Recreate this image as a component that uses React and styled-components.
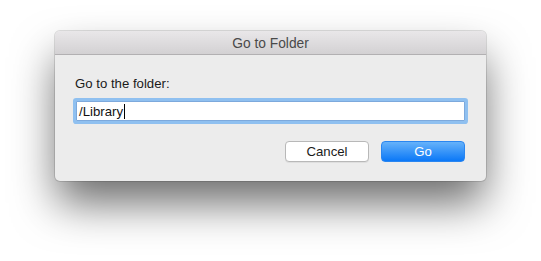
import React from "react";
import styled, { createGlobalStyle } from "styled-components";

const Global = createGlobalStyle`
  html, body { margin: 0; padding: 0; background: #ffffff; }
  body { font-family: "Liberation Sans", "Helvetica Neue", Arial, sans-serif; }
`;

const Stage = styled.div`
  width: 541px;
  height: 261px;
  padding: 31px 0 0 55px;
  box-sizing: border-box;
  overflow: hidden;
`;

const Window = styled.div`
  width: 431px;
  height: 150px;
  box-sizing: border-box;
  background: #ececec;
  border-radius: 5px;
  box-shadow: 0 0 0 1px rgba(0, 0, 0, 0.12), 0 24px 44px -2px rgba(0, 0, 0, 0.58);
  display: flex;
  flex-direction: column;
  overflow: hidden;
`;

const TitleBar = styled.div`
  height: 21px;
  flex: none;
  border-bottom: 1px solid #b2b0b2;
  background: linear-gradient(#e9e7e9, #d3d1d3);
  display: flex;
  align-items: center;
  justify-content: center;
  font-size: 13.8px;
  color: #4a4a4a;
  padding-top: 2px;
`;

const Body = styled.div`
  flex: 1;
  display: flex;
  flex-direction: column;
  padding: 21px 21px 20px 20px;
`;

const Label = styled.div`
  font-size: 13.2px;
  line-height: 16px;
  color: #1a1a1a;
`;

const Field = styled.div`
  margin: 9px 0 0 1px;
  height: 20px;
  box-sizing: border-box;
  background: #ffffff;
  border: 1px solid #7da9dc;
  box-shadow: 0 0 0 3px #8fc0f0;
  border-radius: 1px;
  display: flex;
  align-items: center;
  padding-left: 2px;
  font-size: 13.2px;
  color: #111;
`;

const Caret = styled.span`
  display: inline-block;
  width: 1px;
  height: 15px;
  background: #000;
  margin-left: 1px;
`;

const Actions = styled.div`
  margin-top: 20px;
  display: flex;
  justify-content: flex-end;
  gap: 12px;
`;

const Button = styled.div`
  width: 84px;
  height: 21px;
  box-sizing: border-box;
  border-radius: 4px;
  display: flex;
  align-items: center;
  justify-content: center;
  font-size: 13.2px;
  color: ${(p) => (p.$primary ? "#ffffff" : "#1a1a1a")};
  background: ${(p) =>
    p.$primary ? "linear-gradient(#66b2fa, #0b78f7)" : "#ffffff"};
  border: 1px solid ${(p) => (p.$primary ? "#2a86f0" : "#b8b8b8")};
  box-shadow: ${(p) => (p.$primary ? "none" : "0 1px 0 rgba(0,0,0,0.06)")};
`;

export default function App() {
  return (
    <>
      <Global />
      <Stage>
        <Window>
          <TitleBar>Go to Folder</TitleBar>
          <Body>
            <Label>Go to the folder:</Label>
            <Field>
              /Library
              <Caret />
            </Field>
            <Actions>
              <Button>Cancel</Button>
              <Button $primary>Go</Button>
            </Actions>
          </Body>
        </Window>
      </Stage>
    </>
  );
}
